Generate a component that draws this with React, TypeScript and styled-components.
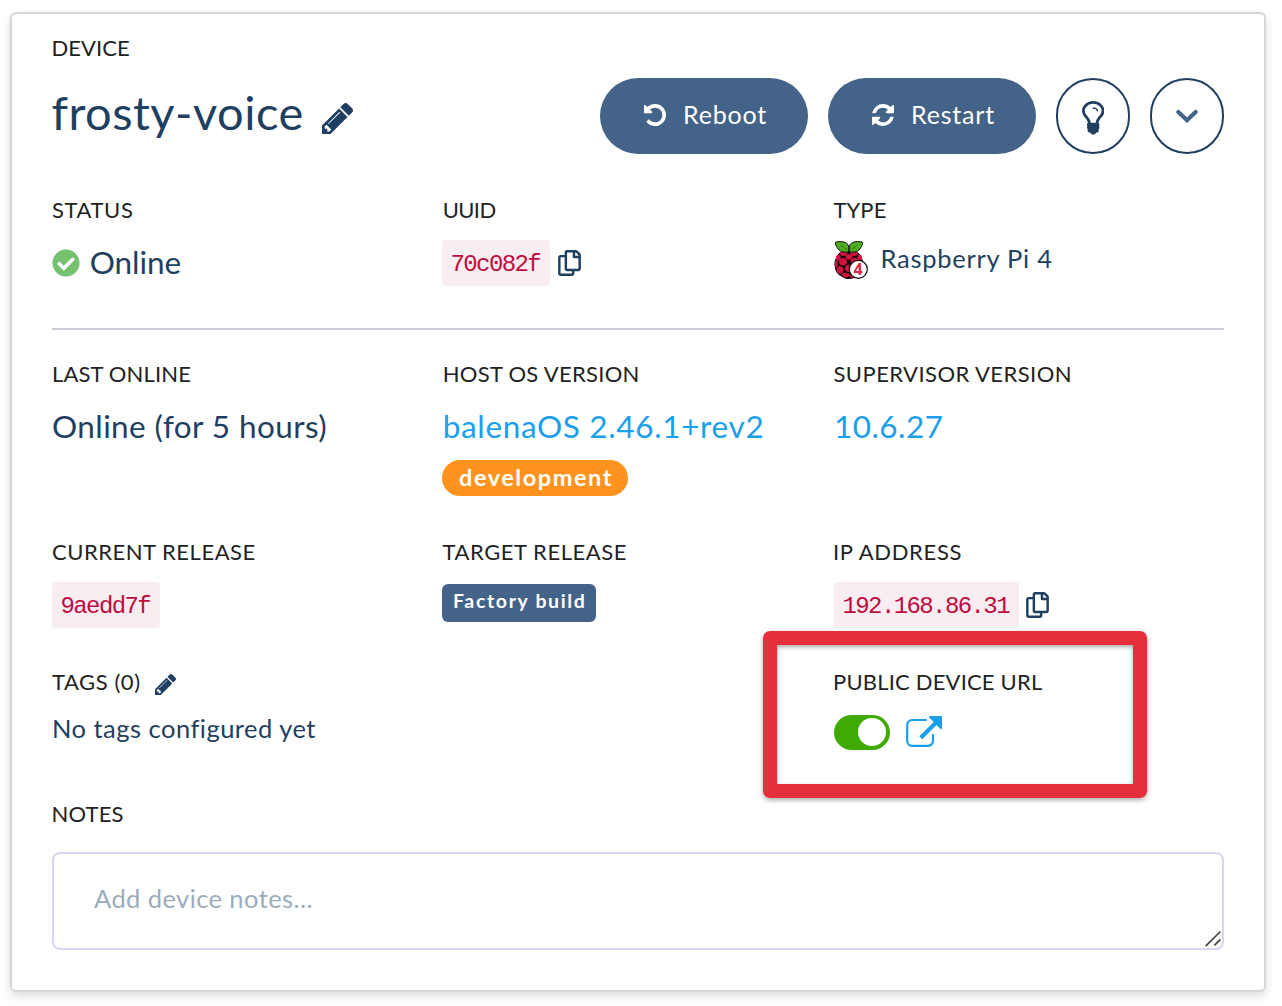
import React from "react";
import styled, { createGlobalStyle, css } from "styled-components";
import { FaCheckCircle, FaRegCopy } from "react-icons/fa";

const navy = "#1f3f61";
const slate = "#446388";
const sky = "#1a9fec";

const GlobalStyle = createGlobalStyle`
  *, *::before, *::after { box-sizing: border-box; }
  body {
    margin: 0;
    background: #fff;
    color: ${navy};
    font-family: Lato, "Noto Sans", sans-serif;
    font-kerning: normal;
  }
  svg { display: block; flex: none; }
`;

const Page = styled.main`
  position: relative;
  width: 1282px;
  height: 1006px;
  padding: 12px 16px 14px 10px;
  overflow: hidden;
`;

const Card = styled.section`
  height: 980px;
  padding: 22px 40px 40px;
  border: 2px solid #d6d6d6;
  border-radius: 6px;
  background: #fff;
  box-shadow: 0 4px 10px rgba(0, 0, 0, 0.14);
`;

const Label = styled.div<{ $spacing?: number; $shift?: number }>`
  display: flex;
  align-items: center;
  height: 24px;
  margin-left: ${(p) => p.$shift ?? 0}px;
  color: #222;
  font-size: 22px;
  line-height: 24px;
  letter-spacing: ${(p) => p.$spacing ?? 0}px;
  white-space: nowrap;
`;

const Header = styled.header`
  display: flex;
  justify-content: space-between;
  height: 76px;
  margin-top: 18px;
`;

const TitleGroup = styled.div`
  display: flex;
  align-items: center;
`;

const Title = styled.h1`
  margin: 0 18px 0 -0.5px;
  padding-bottom: 9px;
  font-size: 47px;
  font-weight: 400;
  line-height: 56px;
  letter-spacing: 0.48px;
`;

const Actions = styled.div`
  display: flex;
  gap: 20px;
`;

const PillButton = styled.button`
  display: flex;
  align-items: center;
  width: 208px;
  height: 76px;
  padding: 0 0 2px 44px;
  border: 0;
  border-radius: 38px;
  background: ${slate};
  color: #fff;
  font: 400 25px/30px Lato, sans-serif;
  letter-spacing: 0.8px;
`;

const PillText = styled.span`
  margin-left: 17px;
  padding-bottom: 2px;
`;

const RoundButton = styled.button<{ $drop?: number }>`
  display: flex;
  align-items: center;
  justify-content: center;
  width: 74px;
  height: 76px;
  padding: ${(p) => p.$drop ?? 0}px 0 0;
  border: 2px solid ${navy};
  border-radius: 38px;
  background: #fff;
  color: ${navy};
`;

const FieldRow = styled.div<{ $top: number }>`
  display: grid;
  grid-template-columns: 390px 392px 1fr;
  margin-top: ${(p) => p.$top}px;
`;

const Value = styled.div<{ $top?: number }>`
  display: flex;
  align-items: center;
  height: 46px;
  margin-top: ${(p) => p.$top ?? 18}px;
  white-space: nowrap;
`;

const large = css`
  padding-bottom: 3px;
  font-size: 31.5px;
  line-height: 40px;
`;

const LargeText = styled.span<{ $spacing: number }>`
  ${large}
  letter-spacing: ${(p) => p.$spacing}px;
`;

const VersionLink = styled.a<{ $spacing: number; $shift?: number }>`
  ${large}
  margin-left: ${(p) => p.$shift ?? 0}px;
  color: ${sky};
  letter-spacing: ${(p) => p.$spacing}px;
`;

const MediumText = styled.span<{ $spacing: number; $lift: number }>`
  padding-bottom: ${(p) => p.$lift}px;
  font-size: 25.5px;
  line-height: 30px;
  letter-spacing: ${(p) => p.$spacing}px;
`;

const OnlineIcon = styled(FaCheckCircle)`
  width: 28px;
  height: 28px;
  margin: 0 10px 0 -0.3px;
  color: #76c16f;
`;

const CodeChip = styled.code`
  height: 46px;
  padding: 4px 10px 0 8.5px;
  border-radius: 4px;
  background: #f8edf1;
  color: #bf0c3f;
  font: 400 24px/41px "Liberation Mono", monospace;
  letter-spacing: -1.6px;
`;

const CopyIcon = styled(FaRegCopy)`
  width: 23px;
  height: 26px;
  margin-left: 7.5px;
`;

const Logo = styled.svg`
  width: 34px;
  height: 38.67px;
  margin: 0 12.5px 6px 0;
`;

const Divider = styled.hr`
  height: 2px;
  margin: 42px 0 0;
  border: 0;
  background: #c7ccd4;
`;

const Badge = styled.span`
  display: block;
  width: 186px;
  height: 36px;
  margin-top: 10px;
  padding-left: 17px;
  border-radius: 18px;
  background: #ff931e;
  color: #fff;
  font-size: 23.5px;
  font-weight: 700;
  line-height: 34px;
  letter-spacing: 1.55px;
`;

const BuildTag = styled.span`
  width: 154px;
  height: 38px;
  margin-bottom: 4px;
  padding-left: 11px;
  border-radius: 6px;
  background: ${slate};
  color: #fff;
  font-size: 19.5px;
  font-weight: 700;
  line-height: 33px;
  letter-spacing: 1.65px;
`;

const PencilSlot = styled.span`
  margin: 4px 0 0 14px;
  color: ${navy};
`;

const TitlePencilSlot = styled.span`
  margin-top: 5px;
`;

const Toggle = styled.button`
  display: flex;
  justify-content: flex-end;
  align-items: center;
  width: 56px;
  height: 35px;
  margin-right: 16px;
  padding: 0 4px 1px;
  border: 0;
  border-radius: 18px;
  background: #3fab02;
`;

const Knob = styled.span`
  width: 28px;
  height: 28px;
  border-radius: 50%;
  background: #fff;
`;

const NotesBox = styled.div`
  position: relative;
  height: 98px;
  margin-top: 26px;
`;

const Notes = styled.textarea`
  display: block;
  width: 100%;
  height: 98px;
  padding: 29px 40px;
  border: 2px solid #d5d8ef;
  border-radius: 8px;
  outline: 0;
  resize: none;
  overflow: hidden;
  background: #fff;
  color: ${navy};
  font: 400 25.5px/30px Lato, sans-serif;
  letter-spacing: 0.42px;
  &::placeholder { color: #9badbd; opacity: 1; }
`;

const Grip = styled.svg`
  position: absolute;
  right: 2px;
  bottom: 2px;
`;

const Highlight = styled.div`
  position: absolute;
  left: 763px;
  top: 630.5px;
  width: 384px;
  height: 167px;
  border: 14px solid #e52f3a;
  border-radius: 7px;
  pointer-events: none;
  box-shadow: 0 2px 5px rgba(0, 0, 0, 0.35), inset 0 2px 4px rgba(0, 0, 0, 0.35);
`;

const glyphs = {
  pencil: {
    box: "0 21 1515 1515",
    d: "M363 1408l91-91-235-235-91 91v107h128v128h107zM886 480q0-22-22-22-10 0-17 7l-542 542q-7 7-7 17 0 22 22 22 10 0 17-7l542-542q7-7 7-17zM832 288l416 416-832 832h-416v-416zM1515 384q0 53-37 90l-166 166-416-416 166-165q36-38 90-38 53 0 91 38l235 234q37 39 37 91z",
  },
  bulb: {
    box: "0 0 1024 1536",
    d: "M736 448q0 13-9.500 22.500t-22.500 9.500-22.500-9.500-9.500-22.500q0-46-54-71t-106-25q-13 0-22.500-9.500t-9.500-22.500 9.500-22.500 22.500-9.500q50 0 99.500 16t87 54 37.500 90zM896 448q0-72-34.500-134t-90-101.500-123-62-136.500-22.500-136.500 22.500-123 62-90 101.500-34.500 134q0 101 68 180 10 11 30.500 33t30.500 33q128 153 141 298h228q13-145 141-298 10-11 30.500-33t30.500-33q68-79 68-180zM1024 448q0 155-103 268-45 49-74.500 87t-59.500 95.500-34 107.500q47 28 47 82 0 37-25 64 25 27 25 64 0 52-45 81 13 23 13 47 0 46-31.500 71t-77.500 25q-20 44-60 70t-87 26-87-26-60-70q-46 0-77.500-25t-31.500-71q0-24 13-47-45-29-45-81 0-37 25-64-25-27-25-64 0-54 47-82-4-50-34-107.500t-59.500-95.500-74.500-87q-103-113-103-268 0-99 44.500-184.500t117-142 164-89 186.500-32.500 186.500 32.500 164 89 117 142 44.500 184.500z",
  },
  undo: {
    box: "0 128 1536 1536",
    d: "M1536 896q0 156-61 298t-164 245-245 164-298 61q-172 0-327-72.500t-264-204.500q-7-10-6.500-22.500t8.500-20.500l137-138q10-9 25-9 16 2 23 12 73 95 179 147t225 52q104 0 198.500-40.500t163.500-109.500 109.500-163.500 40.500-198.500-40.500-198.500-109.500-163.500-163.500-109.500-198.500-40.500q-98 0-188 35.500t-160 101.500l137 138q31 30 14 69-17 40-59 40h-448q-26 0-45-19t-19-45v-448q0-42 40-59 39-17 69 14l130 129q107-101 244.500-156.500t284.500-55.500q156 0 298 61t245 164 164 245 61 298z",
  },
  refresh: {
    box: "0 128 1536 1536",
    d: "M1511 1056q0 5-1 7-64 268-268 434.500t-478 166.500q-146 0-282.500-55t-243.500-157l-129 129q-19 19-45 19t-45-19-19-45v-448q0-26 19-45t45-19h448q26 0 45 19t19 45-19 45l-137 137q71 66 161 102t187 36q134 0 250-65t186-179q11-17 53-117 8-23 30-23h192q13 0 22.500 9.500t9.500 22.500zM1536 256v448q0 26-19 45t-45 19h-448q-26 0-45-19t-19-45 19-45l138-138q-148-137-349-137-134 0-250 65t-186 179q-11 17-53 117-8 23-30 23h-199q-13 0-22.500-9.500t-9.500-22.500v-7q65-268 270-434.500t480-166.500q146 0 284 55.500t245 156.500l130-129q19-19 45-19t45 19 19 45z",
  },
};

function Glyph({ name, width, height }: { name: keyof typeof glyphs; width: number; height: number }) {
  return (
    <svg width={width} height={height} viewBox={glyphs[name].box} fill="currentColor" aria-hidden="true">
      <path d={glyphs[name].d} />
    </svg>
  );
}

const drupelets: [number, number, number, number][] = [
  [29, 38, 11, 7],
  [60, 38, 11, 7],
  [45, 48, 10, 8],
  [13, 50, 7, 9],
  [77, 50, 7, 9],
  [27, 62, 12, 11],
  [62, 62, 12, 11],
  [7, 69, 4.5, 11],
  [45, 82, 12, 11],
  [18, 87, 10, 11],
  [35, 102, 11, 7],
  [56, 104, 10, 6],
];

function RaspberryLogo() {
  return (
    <Logo viewBox="0 0 102 116" aria-hidden="true">
      <path
        d="M44 27C28 26 13 34 10 45C2 54 0 66 2 76C4 94 13 103 24 107C33 115 55 117 65 108C80 102 87 91 87 76C91 65 86 55 80 46C77 34 62 26 44 27Z"
        fill="#0b0b0b"
      />
      {drupelets.map(([cx, cy, rx, ry]) => (
        <ellipse key={`${cx}-${cy}`} cx={cx} cy={cy} rx={rx} ry={ry} fill="#d6103f" />
      ))}
      <g fill="#4fae22" stroke="#0b0b0b" strokeWidth="3" strokeLinejoin="round">
        <path d="M44 32C34 36 14 32 10 20C5 14 4 9 4 4C14 0 35 1 41 10C45 16 45 24 44 32Z" />
        <path d="M46 32C56 36 76 32 80 20C85 14 86 9 86 4C76 0 55 1 49 10C45 16 45 24 46 32Z" />
      </g>
      <path d="M20 13L40 27M70 13L50 27" stroke="#1d5210" strokeWidth="1.6" fill="none" />
      <circle cx="73" cy="85" r="27" fill="#fff" stroke="#0b0b0b" strokeWidth="3.5" />
      <text
        x="72"
        y="102"
        textAnchor="middle"
        fontFamily="Noto Sans, sans-serif"
        fontSize="48"
        fontWeight="700"
        fill="#e2263f"
      >
        4
      </text>
    </Logo>
  );
}

function ExternalLinkIcon() {
  return (
    <svg width="36" height="32" viewBox="0 0 36 32" aria-hidden="true">
      <path
        d="M20 4H6a4.8 4.8 0 0 0-4.8 4.8V25A4.8 4.8 0 0 0 6 29.8h16.2A4.8 4.8 0 0 0 27 25v-6"
        fill="none"
        stroke={sky}
        strokeWidth="2.2"
        strokeLinecap="round"
      />
      <path d="M16.3 20.3L30 6.6" stroke={sky} strokeWidth="4.2" strokeLinecap="square" />
      <path d="M24.6 0H35a1 1 0 0 1 1 1V12a1 1 0 0 1-1.8.8L23.7 2A1.1 1.1 0 0 1 24.6 0Z" fill={sky} />
    </svg>
  );
}

function ChevronIcon() {
  return (
    <svg width="24" height="16" viewBox="0 0 24 16" aria-hidden="true">
      <path
        d="M3.3 4L12 12.2L20.7 4"
        fill="none"
        stroke={slate}
        strokeWidth="4.2"
        strokeLinecap="round"
      />
    </svg>
  );
}

export default function App() {
  return (
    <Page>
      <GlobalStyle />
      <Card>
        <Label $spacing={0.06} $shift={-0.5}>DEVICE</Label>
        <Header>
          <TitleGroup>
            <Title>frosty-voice</Title>
            <TitlePencilSlot>
              <Glyph name="pencil" width={31} height={31} />
            </TitlePencilSlot>
          </TitleGroup>
          <Actions>
            <PillButton>
              <Glyph name="undo" width={22} height={22} />
              <PillText>Reboot</PillText>
            </PillButton>
            <PillButton>
              <Glyph name="refresh" width={22} height={22} />
              <PillText>Restart</PillText>
            </PillButton>
            <RoundButton $drop={4} aria-label="Blink">
              <Glyph name="bulb" width={22.4} height={33.6} />
            </RoundButton>
            <RoundButton aria-label="More actions">
              <ChevronIcon />
            </RoundButton>
          </Actions>
        </Header>

        <FieldRow $top={44}>
          <div>
            <Label $spacing={0.6}>STATUS</Label>
            <Value>
              <OnlineIcon />
              <LargeText $spacing={-0.03}>Online</LargeText>
            </Value>
          </div>
          <div>
            <Label $spacing={-0.6} $shift={0.7}>UUID</Label>
            <Value>
              <CodeChip>70c082f</CodeChip>
              <CopyIcon />
            </Value>
          </div>
          <div>
            <Label $spacing={0.1} $shift={-0.6}>TYPE</Label>
            <Value>
              <RaspberryLogo />
              <MediumText $spacing={0.74} $lift={10}>Raspberry Pi 4</MediumText>
            </Value>
          </div>
        </FieldRow>

        <Divider />

        <FieldRow $top={32}>
          <div>
            <Label $spacing={0.14}>LAST ONLINE</Label>
            <Value>
              <LargeText $spacing={0.41}>Online (for 5 hours)</LargeText>
            </Value>
          </div>
          <div>
            <Label $spacing={0.29} $shift={0.7}>HOST OS VERSION</Label>
            <Value>
              <VersionLink $spacing={0.66} $shift={0.7}>balenaOS 2.46.1+rev2</VersionLink>
            </Value>
            <Badge>development</Badge>
          </div>
          <div>
            <Label $spacing={0.44} $shift={-0.5}>SUPERVISOR VERSION</Label>
            <Value>
              <VersionLink $spacing={0.45}>10.6.27</VersionLink>
            </Value>
          </div>
        </FieldRow>

        <FieldRow $top={44}>
          <div>
            <Label $spacing={0.52}>CURRENT RELEASE</Label>
            <Value>
              <CodeChip>9aedd7f</CodeChip>
            </Value>
          </div>
          <div>
            <Label $spacing={0.54} $shift={0.6}>TARGET RELEASE</Label>
            <Value>
              <BuildTag>Factory build</BuildTag>
            </Value>
          </div>
          <div>
            <Label $spacing={0.68} $shift={-1}>IP ADDRESS</Label>
            <Value>
              <CodeChip>192.168.86.31</CodeChip>
              <CopyIcon />
            </Value>
          </div>
        </FieldRow>

        <FieldRow $top={42}>
          <div>
            <Label $spacing={0.57}>
              TAGS (0)
              <PencilSlot>
                <Glyph name="pencil" width={21} height={21} />
              </PencilSlot>
            </Label>
            <Value $top={15}>
              <MediumText $spacing={0.48} $lift={8}>No tags configured yet</MediumText>
            </Value>
          </div>
          <div />
          <div>
            <Label $spacing={0.19} $shift={-1}>PUBLIC DEVICE URL</Label>
            <Value $top={15}>
              <Toggle role="switch" aria-checked="true">
                <Knob />
              </Toggle>
              <ExternalLinkIcon />
            </Value>
          </div>
        </FieldRow>

        <FieldRow $top={47}>
          <Label $spacing={0.15} $shift={-0.5}>NOTES</Label>
        </FieldRow>
        <NotesBox>
          <Notes placeholder="Add device notes..." />
          <Grip width="18" height="18" viewBox="0 0 18 18" aria-hidden="true">
            <path d="M1.7 16.2L16.4 1.5M10.4 15.4L16.4 9.4" stroke="#444" strokeWidth="1.7" fill="none" />
          </Grip>
        </NotesBox>
      </Card>
      <Highlight />
    </Page>
  );
}
